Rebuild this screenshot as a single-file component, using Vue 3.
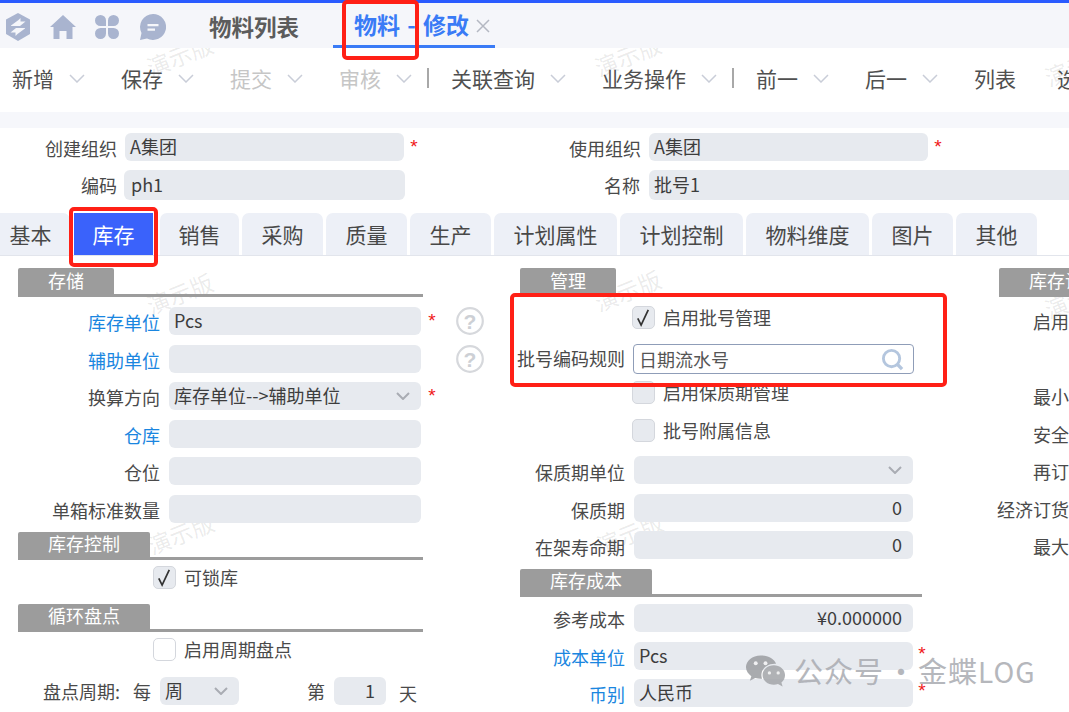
<script setup>
const tools = [
  { t: '新增', c: true }, { t: '保存', c: true }, { t: '提交', c: true, off: true },
  { t: '审核', c: true, off: true, sep: true }, { t: '关联查询', c: true }, { t: '业务操作', c: true, sep: true },
  { t: '前一', c: true }, { t: '后一', c: true }, { t: '列表' }, { t: '选单' }
]
const tabs = ['基本', '库存', '销售', '采购', '质量', '生产', '计划属性', '计划控制', '物料维度', '图片', '其他']
const marks = [
  [145, 40], [593, 40], [1043, 50], [145, 278], [593, 275], [1043, 282], [146, 518], [595, 518]
]
const rightRows = ['启用预警', '', '最小库存', '安全库存', '再订货点', '经济订货批量', '最大库存']
</script>

<template>
  <div class="page">
    <div class="wm-layer">
      <span v-for="(m, i) in marks" :key="i" class="wm" :style="{ left: m[0] + 'px', top: m[1] + 'px' }">演示版</span>
    </div>

    <div class="content">
      <header class="topbar">
        <svg class="ic ic-logo" viewBox="0 0 26 28">
          <path d="M13 0 25 6.500v14.500L13 28 1 21V6.500z" fill="#a9b4cf" />
          <path d="M6 12.500 13.500 7l2-2v3.500h5L15 13H6zM20 15.500 12.500 21l-2 2v-3.500h-5L11 15h9z" fill="#f5f6fa" />
        </svg>
        <svg class="ic ic-home" viewBox="0 0 26 24">
          <path d="M13 0 26 12h-3.500v12h-6v-8h-7v8h-6V12H0z" fill="#a9b4cf" />
        </svg>
        <svg class="ic ic-grid" viewBox="0 0 24 24">
          <path d="M5.500 0A5.500 5.500 0 0 1 11 5.500V11H5.500a5.500 5.500 0 0 1 0-11zM18.500 0a5.500 5.500 0 0 1 0 11H13V5.500A5.500 5.500 0 0 1 18.500 0zM5.500 13H11v5.500A5.500 5.500 0 1 1 5.500 13zM13 13h5.500a5.500 5.500 0 1 1-5.500 5.500z" fill="#a9b4cf" />
        </svg>
        <svg class="ic ic-chat" viewBox="0 0 26 26">
          <path d="M13 0a13 13 0 1 1-6 24.500L0 26l1.500-7A13 13 0 0 1 13 0z" fill="#a9b4cf" />
          <path d="M7.500 10h11v2.200h-11zM7.500 14.500h7.500v2.200H7.500z" fill="#f5f6fa" />
        </svg>
        <span class="tt-list">物料列表</span>
        <div class="tt-cur">
          <span class="tt-name">物料 - 修改</span>
          <svg class="tt-x" viewBox="0 0 14 14"><path d="M1 1l12 12M13 1L1 13" stroke="#b4b8c2" stroke-width="1.500" /></svg>
        </div>
      </header>

      <nav class="toolbar">
        <template v-for="b in tools" :key="b.t">
          <div class="tb-item" :class="{ off: b.off, 'has-sep': b.sep, plain: !b.c }">
            <span>{{ b.t }}</span>
            <svg v-if="b.c" class="tb-chev" viewBox="0 0 16 9"><path d="M1 1l7 7 7-7" fill="none" stroke="#c9cdd8" stroke-width="1.500" /></svg>
          </div>
          <i v-if="b.sep" class="tb-sep"></i>
        </template>
      </nav>
      <div class="band"></div>

      <section class="head">
        <div class="head-row">
          <label class="hl">创建组织</label>
          <div class="field hf">A集团</div>
          <b class="star hs">*</b>
          <label class="hl hl2">使用组织</label>
          <div class="field hf">A集团</div>
          <b class="star hs">*</b>
        </div>
        <div class="head-row tall">
          <label class="hl">编码</label>
          <div class="field hf2">ph1</div>
          <label class="hl hl3">名称</label>
          <div class="field hf3">批号1</div>
        </div>
      </section>

      <div class="tabs">
        <div v-for="(t, i) in tabs" :key="t" class="tab" :class="{ active: i === 1 }">{{ t }}</div>
      </div>

      <main class="cols">
        <div class="col col-l">
          <div class="sec"><span class="sec-t">存储</span></div>
          <div class="rows">
            <div class="row">
              <label class="lb link">库存单位</label><div class="field fl">Pcs</div><b class="star">*</b>
              <svg class="help" viewBox="0 0 28 28"><circle cx="14" cy="14" r="12.800" fill="none" stroke="#d6d8dc" stroke-width="2.200" /><text x="14" y="21.500" text-anchor="middle" class="help-q">?</text></svg>
            </div>
            <div class="row">
              <label class="lb link">辅助单位</label><div class="field fl"></div><b class="star blank"></b>
              <svg class="help" viewBox="0 0 28 28"><circle cx="14" cy="14" r="12.800" fill="none" stroke="#d6d8dc" stroke-width="2.200" /><text x="14" y="21.500" text-anchor="middle" class="help-q">?</text></svg>
            </div>
            <div class="row">
              <label class="lb">换算方向</label>
              <div class="field fl sel">库存单位--&gt;辅助单位<svg class="dd" viewBox="0 0 14 8"><path d="M1 1l6 6 6-6" fill="none" stroke="#a9acb3" stroke-width="2" /></svg></div>
              <b class="star">*</b>
            </div>
            <div class="row"><label class="lb link">仓库</label><div class="field fl"></div></div>
            <div class="row"><label class="lb">仓位</label><div class="field fl"></div></div>
            <div class="row"><label class="lb">单箱标准数量</label><div class="field fl"></div></div>
          </div>
          <div class="sec sec-w"><span class="sec-t wide">库存控制</span></div>
          <div class="cb-row cb-l first"><span class="cb"><svg viewBox="0 0 22 22"><path d="M5 12l3.500 7L16 3" fill="none" stroke="#333" stroke-width="1.800" /></svg></span>可锁库</div>
          <div class="sec sec-w"><span class="sec-t wide">循环盘点</span></div>
          <div class="cb-row cb-l first second"><span class="cb white"></span>启用周期盘点</div>
          <div class="cycle">
            <span class="cy-a">盘点周期:</span><span class="cy-b">每</span>
            <div class="field cy-s sel">周<svg class="dd" viewBox="0 0 14 8"><path d="M1 1l6 6 6-6" fill="none" stroke="#a9acb3" stroke-width="2" /></svg></div>
            <span class="cy-c">第</span>
            <div class="field cy-n num">1</div>
            <span class="cy-d">天</span>
          </div>
        </div>

        <div class="col col-m">
          <div class="sec"><span class="sec-t">管理</span></div>
          <div class="rows m">
            <div class="cb-row cb-m"><span class="cb"><svg viewBox="0 0 22 22"><path d="M5 12l3.500 7L16 3" fill="none" stroke="#333" stroke-width="1.800" /></svg></span>启用批号管理</div>
            <div class="row">
              <label class="lb lbm rule">批号编码规则</label>
              <div class="field fm search">日期流水号
                <svg class="lens" viewBox="0 0 24 24"><circle cx="11" cy="11" r="8.500" fill="none" stroke="#b4c6de" stroke-width="3" /><path d="M17 17l5 5" stroke="#b4c6de" stroke-width="3.500" /></svg>
              </div>
            </div>
            <div class="cb-row cb-m"><span class="cb"></span>启用保质期管理</div>
            <div class="cb-row cb-m"><span class="cb"></span>批号附属信息</div>
            <div class="row">
              <label class="lb lbm low">保质期单位</label>
              <div class="field fm sel"><svg class="dd" viewBox="0 0 14 8"><path d="M1 1l6 6 6-6" fill="none" stroke="#a9acb3" stroke-width="2" /></svg></div>
            </div>
            <div class="row"><label class="lb lbm low">保质期</label><div class="field fm num">0</div></div>
            <div class="row"><label class="lb lbm low">在架寿命期</label><div class="field fm num">0</div></div>
          </div>
          <div class="sec sec-c"><span class="sec-t wide2">库存成本</span></div>
          <div class="rows cost">
            <div class="row"><label class="lb lbm">参考成本</label><div class="field fm num">¥0.000000</div></div>
            <div class="row"><label class="lb lbm link">成本单位</label><div class="field fm">Pcs</div><b class="star s2">*</b></div>
            <div class="row"><label class="lb lbm link">币别</label><div class="field fm">人民币</div><b class="star s2">*</b></div>
          </div>
        </div>

        <div class="col col-r">
          <div class="sec sec-r"><span class="sec-t wide2">库存设置</span></div>
          <div class="rows m">
            <div v-for="(r, i) in rightRows" :key="i" class="row"><label class="lb lbr">{{ r }}</label></div>
          </div>
        </div>
      </main>
    </div>

    <i class="redbox rb1"></i>
    <i class="redbox rb2"></i>
    <i class="redbox rb3"></i>

    <div class="stamp">
      <svg class="wx" viewBox="0 0 42 34">
        <path d="M16 1C7.500 1 1 6.500 1 13c0 4 2.300 7 5.500 9.300L5 27l5.500-2.800c2 .6 3.800.8 5.500.8.500 0 1 0 1.500-.1C17 23.500 16.800 22 16.800 21c0-6.500 6-11.500 13.700-11.500h1.300C30 4.500 23.700 1 16 1z" fill="#9b9da1" />
        <path d="M41 21c0-5.800-5.500-10-11.500-10S18 15.200 18 21s5.500 10 11.500 10c1.500 0 3-.3 4.300-.7L38.500 33l-1.200-4.300C39.600 26.800 41 24 41 21z" fill="#a3a5a9" />
        <circle cx="11" cy="9" r="2" fill="#f2f2f3" /><circle cx="21" cy="9" r="2" fill="#f2f2f3" />
        <circle cx="25" cy="19" r="1.700" fill="#eceded" /><circle cx="34" cy="19" r="1.700" fill="#eceded" />
      </svg>
      <span class="stamp-t">公众号<span class="stamp-dot">·</span>金蝶<span class="stamp-en">LOG</span></span>
    </div>
  </div>
</template>

<style scoped>
.page {
  position: relative;
  width: 1069px;
  height: 712px;
  overflow: hidden;
  background: #fff;
  font-family: "Noto Sans CJK SC", "Liberation Sans", sans-serif;
  font-size: 18px;
  color: #4a4a4a;
}
.wm-layer { position: absolute; inset: 0; z-index: 0; pointer-events: none; }
.wm {
  position: absolute;
  font-size: 23px;
  line-height: 30px;
  color: rgba(60, 60, 60, 0.1);
  transform: rotate(-22deg);
  white-space: nowrap;
}
.content { position: relative; z-index: 1; }

.topbar {
  box-sizing: border-box;
  height: 48px;
  border-top: 3px solid #2a5bff;
  background: #f5f6fa;
  display: flex;
  align-items: center;
}
.ic { flex: none; display: block; }
.ic-logo { width: 26px; height: 28px; margin: 2px 0 0 5px; }
.ic-home { width: 26px; height: 24px; margin: 2px 0 0 19px; }
.ic-grid { width: 24px; height: 24px; margin: 2px 0 0 19px; }
.ic-chat { width: 26px; height: 26px; margin: 2px 0 0 21px; }
.tt-list {
  margin: 1px 0 0 43px;
  font-size: 22.500px;
  font-weight: 700;
  color: #5c5c5c;
  white-space: nowrap;
}
.tt-cur {
  box-sizing: border-box;
  margin-left: 34px;
  width: 162px;
  height: 45px;
  padding: 0 0 0 21px;
  border-bottom: 3px solid #3a7bf6;
  display: flex;
  align-items: center;
}
.tt-name {
  font-size: 23px;
  font-weight: 700;
  color: #3a7bf6;
  white-space: pre;
  word-spacing: 2px;
}
.tt-x { width: 14px; height: 14px; margin: 3px 0 0 7px; display: block; }

.toolbar {
  box-sizing: border-box;
  height: 64px;
  padding: 0 0 4px 12px;
  display: flex;
  align-items: center;
  font-size: 21px;
  white-space: nowrap;
}
.tb-item { display: flex; align-items: center; margin-right: 36px; color: #505050; flex: none; }
.tb-item.off { color: #c6c6c6; }
.tb-item.has-sep { margin-right: 15px; }
.tb-item.plain { margin-right: 41px; }
.tb-chev { width: 16px; height: 9px; margin-left: 15px; display: block; }
.tb-sep { flex: none; width: 2px; height: 20px; margin-right: 22px; background: #a8a8a8; }
.band { height: 16px; background: #f6f7fb; }

.head { height: 85px; box-sizing: border-box; padding-top: 5px; }
.head-row { display: flex; align-items: flex-start; height: 37px; white-space: nowrap; }
.head-row.tall { height: 43px; }
.hl { flex: none; width: 117px; text-align: right; padding-top: 1px; line-height: 28px; }
.hl2 { width: 220px; }
.hl3 { width: 235px; }
.field {
  box-sizing: border-box;
  flex: none;
  height: 28px;
  line-height: 27px;
  padding: 0 5px;
  background: #e7eaef;
  border-radius: 6px;
  color: #3d3d3d;
  position: relative;
  white-space: nowrap;
}
.hf { width: 279px; margin-left: 8px; }
.hf2 { width: 281px; height: 30px; margin-left: 7px; line-height: 29px; padding-left: 7px; }
.hf3 { width: 500px; height: 30px; margin-left: 9px; line-height: 29px; padding-left: 5px; }
.star {
  flex: none;
  width: 14px;
  margin-left: 4px;
  color: #f01818;
  font-family: "Liberation Sans", sans-serif;
  font-size: 19px;
  font-weight: 400;
  line-height: 28px;
  text-align: center;
}
.hs { margin-left: 3px; }
.star.blank { visibility: hidden; }
.star.s2 { margin-left: 2px; line-height: 24px; }

.tabs {
  height: 43px;
  box-sizing: border-box;
  border-bottom: 1px solid #e2e5ec;
  display: flex;
  margin-left: -9px;
  overflow: visible;
}
.tab {
  box-sizing: border-box;
  flex: none;
  width: 81px;
  height: 42px;
  margin-right: 3px;
  background: #edf0f7;
  border-radius: 7px 7px 0 0;
  font-size: 21px;
  line-height: 43px;
  text-align: center;
  color: #484848;
}
.tab:nth-child(1) { width: 79px; margin-right: 4px; }
.tab:nth-child(2) { width: 79px; margin-right: 7px; }
.tab:nth-child(3) { width: 79px; }
.tab:nth-child(7), .tab:nth-child(8), .tab:nth-child(9) { width: 123px; }
.tab.active { background: #3a62fb; color: #fff; border-radius: 0; }

.cols { display: flex; padding: 12px 0 0 18px; }
.col { flex: none; }
.col-l { width: 405px; }
.col-m { width: 402px; margin-left: 97px; }
.col-r { width: 200px; margin-left: 77px; }

.sec {
  box-sizing: border-box;
  height: 29px;
  border-bottom: 3px solid #9c9c9c;
  color: #fff;
}
.sec-t {
  display: block;
  width: 96px;
  height: 26px;
  background: #9c9c9c;
  border-radius: 2px 2px 0 0;
  text-align: center;
  font-size: 18px;
  line-height: 25px;
}
.sec-t.wide { width: 132px; }
.sec-t.wide2 { width: 132px; }
.sec-w { height: 28px; }
.sec-w .sec-t { height: 25px; line-height: 22px; }
.sec-c { height: 28px; }
.sec-c .sec-t { height: 25px; line-height: 22px; }
.sec-r { width: 200px; }

.rows { padding-top: 10px; }
.rows.m { padding-top: 9px; }
.rows.cost { padding-top: 7.500px; }
.row { display: flex; align-items: flex-start; height: 37.500px; white-space: nowrap; }
.lb {
  flex: none;
  box-sizing: border-box;
  width: 142px;
  margin-right: 9px;
  padding-top: 1px;
  line-height: 28px;
  text-align: right;
}
.lbm { width: 108px; margin-left: -3px; }
.lbm.rule { padding-top: 0; }
.lbm.low { padding-top: 2px; }
.lbr { width: 108px; margin-left: -2px; }
.link { color: #1a86e0; }
.fl { width: 252px; }
.fm { width: 279px; }
.help { flex: none; width: 28px; height: 28px; margin-left: 17px; }
.help-q {
  font-family: "Liberation Sans", sans-serif;
  font-size: 21px;
  font-weight: 700;
  fill: #cdd0d5;
}
.sel .dd { position: absolute; right: 11px; top: 10px; width: 14px; height: 8px; }
.num { text-align: right; padding-right: 11px; }
.search {
  width: 281px;
  height: 30px;
  margin-left: -1px;
  background: #fff;
  border: 1px solid #8f9db8;
  border-radius: 4px;
  line-height: 28px;
  color: #555;
}
.lens { position: absolute; right: 9px; top: 3px; width: 23px; height: 23px; }

.cb-row { display: flex; align-items: flex-start; height: 37.500px; line-height: 22px; color: #4a4a4a; white-space: nowrap; }
.cb-row .cb { margin-right: 8px; }
.cb {
  flex: none;
  box-sizing: border-box;
  display: block;
  width: 23px;
  height: 23px;
  background: #e7eaef;
  border: 1px solid #d4d7dd;
  border-radius: 5px;
}
.cb svg { display: block; width: 21px; height: 21px; }
.cb.white { background: #fff; }
.cb-m { padding-left: 112px; }
.cb-l { padding-left: 135px; }
.cb-l.first { height: 44px; padding-top: 6px; box-sizing: border-box; }
.cb-l.second { height: 45px; }

.cycle { display: flex; align-items: flex-start; white-space: nowrap; line-height: 28px; }
.cycle span { flex: none; }
.cy-a { width: 90px; margin-left: 25px; }
.cy-b { width: 18px; }
.cy-s { width: 79px; margin-left: 9px; }
.cy-c { margin-left: 68px; }
.cy-n { width: 52px; margin-left: 9px; }
.cy-d { margin-left: 13px; padding-top: 2px; }

.redbox {
  position: absolute;
  z-index: 3;
  box-sizing: border-box;
  border: 4px solid #ff2016;
  border-radius: 5px;
}
.rb1 { left: 342px; top: 0; width: 77px; height: 60px; }
.rb2 { left: 69px; top: 207px; width: 89px; height: 60px; }
.rb3 { left: 510px; top: 293px; width: 437px; height: 94px; }

.stamp {
  position: absolute;
  z-index: 4;
  left: 745px;
  top: 650px;
  display: flex;
  align-items: center;
  opacity: 0.85;
}
.wx { width: 41px; height: 34px; display: block; }
.stamp-t {
  margin-left: 8px;
  font-size: 29px;
  line-height: 40px;
  letter-spacing: 1px;
  color: #a9abb1;
  white-space: nowrap;
}
.stamp-dot { display: inline-block; width: 34px; text-align: center; letter-spacing: 0; }
.stamp-en { font-size: 28px; letter-spacing: 1px; }
</style>
